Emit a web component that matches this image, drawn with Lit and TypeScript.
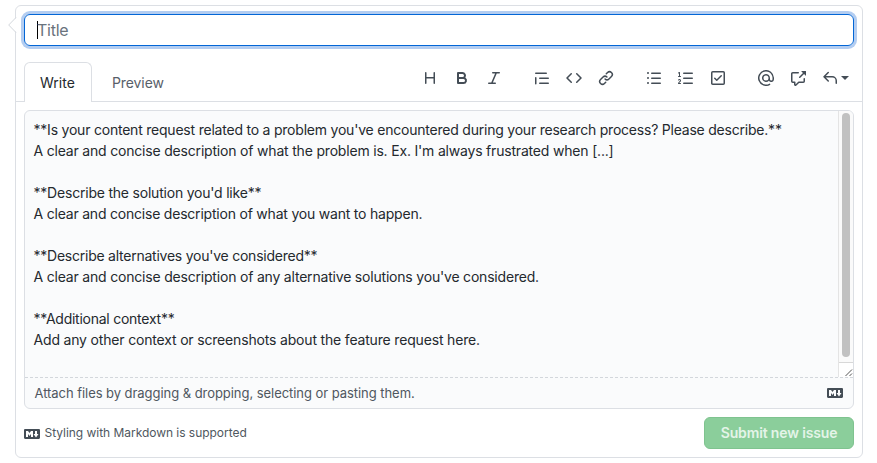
import { LitElement, html, css, svg } from "lit";
import { customElement, property } from "lit/decorators.js";

const ICONS: Record<string, string> = {
  heading: "M3.75 2a.75.75 0 01.75.75V7h7V2.75a.75.75 0 011.5 0v10.5a.75.75 0 01-1.5 0V8.5h-7v4.75a.75.75 0 01-1.5 0V2.75A.75.75 0 013.75 2z",
  bold: "M4 2a1 1 0 00-1 1v10a1 1 0 001 1h5.5a3.5 3.5 0 001.852-6.47A3.5 3.5 0 008.5 2H4zm4.5 5a1.5 1.5 0 100-3H5v3h3.5zM5 9v3h4.5a1.5 1.5 0 000-3H5z",
  italic: "M6 2.75A.75.75 0 016.75 2h6.5a.75.75 0 010 1.5h-2.505l-3.858 9H9.25a.75.75 0 010 1.5h-6.5a.75.75 0 010-1.5h2.505l3.858-9H6.75A.75.75 0 016 2.75z",
  quote: "M1.75 2.5a.75.75 0 000 1.5h10.5a.75.75 0 000-1.5H1.75zm4 5a.75.75 0 000 1.5h8.5a.75.75 0 000-1.5h-8.5zm0 5a.75.75 0 000 1.5h8.5a.75.75 0 000-1.5h-8.5zM2.5 7.75a.75.75 0 00-1.5 0v6a.75.75 0 001.5 0v-6z",
  code: "M4.72 3.22a.75.75 0 011.06 1.06L2.06 8l3.72 3.72a.75.75 0 11-1.06 1.06L.47 8.53a.75.75 0 010-1.06l4.25-4.25zm6.56 0a.75.75 0 10-1.06 1.06L13.94 8l-3.72 3.72a.75.75 0 101.06 1.06l4.25-4.25a.75.75 0 000-1.06l-4.25-4.25z",
  link: "M7.775 3.275a.75.75 0 001.06 1.06l1.25-1.25a2 2 0 112.83 2.83l-2.5 2.5a2 2 0 01-2.83 0 .75.75 0 00-1.06 1.06 3.5 3.5 0 004.95 0l2.5-2.5a3.5 3.5 0 00-4.95-4.95l-1.25 1.25zm-4.69 9.64a2 2 0 010-2.83l2.5-2.5a2 2 0 012.83 0 .75.75 0 001.06-1.06 3.5 3.5 0 00-4.95 0l-2.5 2.5a3.5 3.5 0 004.95 4.95l1.25-1.25a.75.75 0 00-1.06-1.06l-1.25 1.25a2 2 0 01-2.83 0z",
  bullets: "M2 4a1 1 0 100-2 1 1 0 000 2zm3.75-1.5a.75.75 0 000 1.5h8.5a.75.75 0 000-1.5h-8.5zm0 5a.75.75 0 000 1.5h8.5a.75.75 0 000-1.5h-8.5zm0 5a.75.75 0 000 1.5h8.5a.75.75 0 000-1.5h-8.5zM3 8a1 1 0 11-2 0 1 1 0 012 0zm-1 6a1 1 0 100-2 1 1 0 000 2z",
  numbers: "M2.003 2.5a.5.5 0 00-.723-.447l-1.003.5a.5.5 0 00.446.895l.28-.14V6H.5a.5.5 0 000 1h2.006a.5.5 0 100-1h-.503V2.5zM5 3.25a.75.75 0 01.75-.75h8.5a.75.75 0 010 1.5h-8.5A.75.75 0 015 3.25zm0 5a.75.75 0 01.75-.75h8.5a.75.75 0 010 1.5h-8.5A.75.75 0 015 8.25zm0 5a.75.75 0 01.75-.75h8.5a.75.75 0 010 1.5h-8.5a.75.75 0 01-.75-.75zM.924 10.32l.003-.004a.851.851 0 01.144-.153A.66.66 0 011.5 10c.195 0 .306.068.374.146a.57.57 0 01.128.376c0 .453-.269.682-.8 1.078l-.035.025C.692 11.98 0 12.495 0 13.5a.5.5 0 00.5.5h2.003a.5.5 0 000-1H1.146c.132-.197.351-.372.654-.597l.047-.035c.47-.35 1.156-.858 1.156-1.845 0-.365-.118-.744-.377-1.038-.268-.303-.658-.484-1.126-.484-.48 0-.84.202-1.068.392a1.858 1.858 0 00-.348.384l-.007.011a.5.5 0 00.848.531z",
  tasks: "M2.5 2.75a.25.25 0 01.25-.25h10.5a.25.25 0 01.25.25v10.5a.25.25 0 01-.25.25H2.75a.25.25 0 01-.25-.25V2.75zM2.75 1A1.75 1.75 0 001 2.75v10.5c0 .966.784 1.75 1.75 1.75h10.5A1.75 1.75 0 0015 13.25V2.75A1.75 1.75 0 0013.25 1H2.75zm9.03 5.28a.75.75 0 00-1.06-1.06L6.75 9.19 5.28 7.72a.75.75 0 00-1.06 1.06l2 2a.75.75 0 001.06 0l4.5-4.5z",
  mention: "M4.75 2.37a6.5 6.5 0 006.5 11.26.75.75 0 01.75 1.298 8 8 0 113.994-7.273.754.754 0 01.006.095v1.5a2.75 2.75 0 01-5.072 1.475A4 4 0 1112 8v1.25a1.25 1.25 0 002.5 0V7.867a6.5 6.5 0 00-9.75-5.496V2.37zM10.5 8a2.5 2.5 0 10-5 0 2.5 2.5 0 005 0z",
  reference: "M16 1.25v4.146a.25.25 0 01-.427.177L14.03 4.03l-3.75 3.75a.75.75 0 11-1.06-1.06l3.75-3.75-1.543-1.543A.25.25 0 0111.604 1h4.146a.25.25 0 01.25.25zM2.75 3.5a.25.25 0 00-.25.25v7.5c0 .138.112.25.25.25h2a.75.75 0 01.75.75v2.19l2.72-2.72a.75.75 0 01.53-.22h4.5a.25.25 0 00.25-.25v-2.5a.75.75 0 111.5 0v2.5A1.75 1.75 0 0113.25 13H9.06l-2.573 2.573A1.457 1.457 0 014 14.543V13H2.75A1.75 1.75 0 011 11.25v-7.5C1 2.784 1.784 2 2.75 2h5.5a.75.75 0 010 1.5h-5.5z",
  reply: "M6.78 1.97a.75.75 0 010 1.06L3.81 6h6.44A4.75 4.75 0 0115 10.75v2.5a.75.75 0 01-1.5 0v-2.5a3.25 3.25 0 00-3.25-3.25H3.81l2.97 2.97a.75.75 0 11-1.06 1.06L1.47 7.28a.75.75 0 010-1.06l4.25-4.25a.75.75 0 011.06 0z",
  markdown: "M14.85 3H1.15C.52 3 0 3.52 0 4.15v7.69C0 12.48.52 13 1.15 13h13.69c.64 0 1.15-.52 1.15-1.15v-7.7C16 3.52 15.48 3 14.85 3zM9 11H7V8L5.5 9.92 4 8v3H2V5h2l1.5 2L7 5h2v6zm2.99.5L9.5 8H11V5h2v3h1.5l-2.51 3.5z",
};

@customElement("ui-icon")
class UiIcon extends LitElement {
  @property() name = "";
  static styles = css`
    :host { display: block; flex: none; width: 16px; height: 16px; }
    .glyph { display: block; width: 100%; height: 100%; fill: currentColor; }
  `;
  render() {
    return html`<svg class="glyph" viewBox="0 0 16 16">${svg`<path fill-rule="evenodd" d=${ICONS[this.name]}></path>`}</svg>`;
  }
}

const TOOL_GROUPS = [
  ["heading", "bold", "italic"],
  ["quote", "code", "link"],
  ["bullets", "numbers", "tasks"],
  ["mention", "reference", "reply"],
];

// Each line carries its own tracking in px.
const LINES: [string, number][] = [
  ["**Is your content request related to a problem you've encountered during your research process? Please describe.**", -0.217],
  ["A clear and concise description of what the problem is. Ex. I'm always frustrated when [...]", -0.19],
  ["", 0],
  ["**Describe the solution you'd like**", -0.21],
  ["A clear and concise description of what you want to happen.", -0.21],
  ["", 0],
  ["**Describe alternatives you've considered**", -0.24],
  ["A clear and concise description of any alternative solutions you've considered.", -0.195],
  ["", 0],
  ["**Additional context**", -0.25],
  ["Add any other context or screenshots about the feature request here.", -0.175],
];

@customElement("app-root")
class AppRoot extends LitElement {
  static styles = css`
    :host {
      display: block; box-sizing: border-box; height: 463px; padding: 5px 14px 5px 15px;
      background: #fff; color: #24292e; overflow: hidden;
      font: 14px/21px Inter, "Liberation Sans", sans-serif;
    }
    * { box-sizing: border-box; }
    .card {
      position: relative; display: flex; flex-direction: column;
      height: 453px; border: 1px solid #dcdfe4; border-radius: 6px;
    }
    .pointer { position: absolute; left: -8px; top: 10px; width: 9px; height: 18px; }
    .title {
      display: flex; align-items: center; margin: 8px 8px 0; height: 32px; padding: 0 12px;
      border: 1px solid #0366d6; border-radius: 6px; font-size: 16px; color: #6a737d;
      box-shadow: 0 0 0 3px #b3cdf1;
    }
    .ph { letter-spacing: -0.25px; }
    .caret { width: 1px; height: 18px; background: #000; margin-right: -1px; }
    .head {
      display: flex; align-items: flex-end; height: 56px; padding-left: 8px;
      border-bottom: 1px solid #dcdfe4;
    }
    .tab { height: 40px; padding: 10px 16px 0; line-height: 23px; color: #586069; white-space: nowrap; }
    .tab.active {
      width: 68px; margin-bottom: -1px; color: #24292e; background: #fff; padding: 8px 15px 0;
      border: 1px solid #dcdfe4; border-bottom: 0; border-radius: 6px 6px 0 0;
    }
    .tab.idle { padding-left: 20px; letter-spacing: -0.1px; }
    .tools { display: flex; gap: 32px; margin: 0 13px 15px auto; color: #444d56; }
    .group { display: flex; gap: 16px; }
    .menu { display: flex; align-items: center; gap: 3px; }
    .down { border: 4px solid transparent; border-top-color: currentColor; border-bottom: 0; }
    .editor {
      display: flex; flex-direction: column; height: 299px; margin: 8px 8px 0;
      border: 1px solid #dcdfe4; border-radius: 6px; background: #fafbfc; overflow: hidden;
    }
    .area { display: flex; height: 266px; }
    .text { flex: 1; padding: 8px 0 0 8.5px; white-space: pre; }
    .line { height: 21px; }
    .bar { display: flex; flex-direction: column; width: 15px; border-left: 1px solid #e4e4e4; background: #fafafa; }
    .track { flex: 1; padding: 2px 3px 4px; }
    .thumb { width: 8px; height: 244px; border-radius: 4px; background: #c1c1c1; }
    .grip { height: 15px; border-top: 1px solid #d8d8d8; background: #fff; }
    .gripmark { display: block; width: 14px; height: 14px; }
    .attach {
      display: flex; align-items: center; justify-content: space-between; flex: 1;
      padding: 0 10px 0 9.5px; font-size: 13px; letter-spacing: -0.05px; color: #4f5760;
    }
    .attach ui-icon, .foot ui-icon { color: #444d56; }
    .dash { display: block; width: 100%; height: 1px; background: repeating-linear-gradient(90deg, #d3d7dc 0 3px, transparent 3px 5px); }
    .foot { display: flex; align-items: flex-start; height: 32px; margin: 8px 8px 0; }
    .foot ui-icon { margin-top: 9px; }
    .hint { margin: 5px 0 0 4.5px; font-size: 12px; letter-spacing: -0.035px; color: #4f5760; }
    .submit {
      display: flex; justify-content: center; width: 150px; height: 32px; margin-left: auto; padding-top: 4px;
      border: 1px solid #7fc38f; border-radius: 6px; background: #8bce9b; color: #e4f4e8;
      font-weight: 600; letter-spacing: -0.15px;
    }
  `;

  render() {
    return html`
      <div class="card">
        <svg class="pointer" viewBox="0 0 9 18">
          <path d="M9 1L1 9l8 8z" fill="#fff"></path>
          <path d="M8 1.500L.7 9l7.300 7.500" fill="none" stroke="#d3d7dc"></path>
        </svg>
        <div class="title"><span class="caret"></span><span class="ph">Title</span></div>
        <div class="head">
          <div class="tab active">Write</div>
          <div class="tab idle">Preview</div>
          <div class="tools">
            ${TOOL_GROUPS.map((g) => html`<div class="group">${g.map((n) =>
              n === "reply"
                ? html`<div class="menu"><ui-icon name=${n}></ui-icon><span class="down"></span></div>`
                : html`<ui-icon name=${n}></ui-icon>`)}</div>`)}
          </div>
        </div>
        <div class="editor">
          <div class="area">
            <div class="text">${LINES.map(([t, s]) => html`<div class="line" style="letter-spacing:${s}px">${t}</div>`)}</div>
            <div class="bar">
              <div class="track"><div class="thumb"></div></div>
              <div class="grip"><svg class="gripmark" viewBox="0 0 14 14"><path d="M6.500 13L13 6.500M10.500 13L13 10.500" stroke="#555" fill="none"></path></svg></div>
            </div>
          </div>
          <span class="dash"></span>
          <div class="attach"><span>Attach files by dragging &amp; dropping, selecting or pasting them.</span><ui-icon name="markdown"></ui-icon></div>
        </div>
        <div class="foot">
          <ui-icon name="markdown"></ui-icon><span class="hint">Styling with Markdown is supported</span>
          <div class="submit">Submit new issue</div>
        </div>
      </div>`;
  }
}
